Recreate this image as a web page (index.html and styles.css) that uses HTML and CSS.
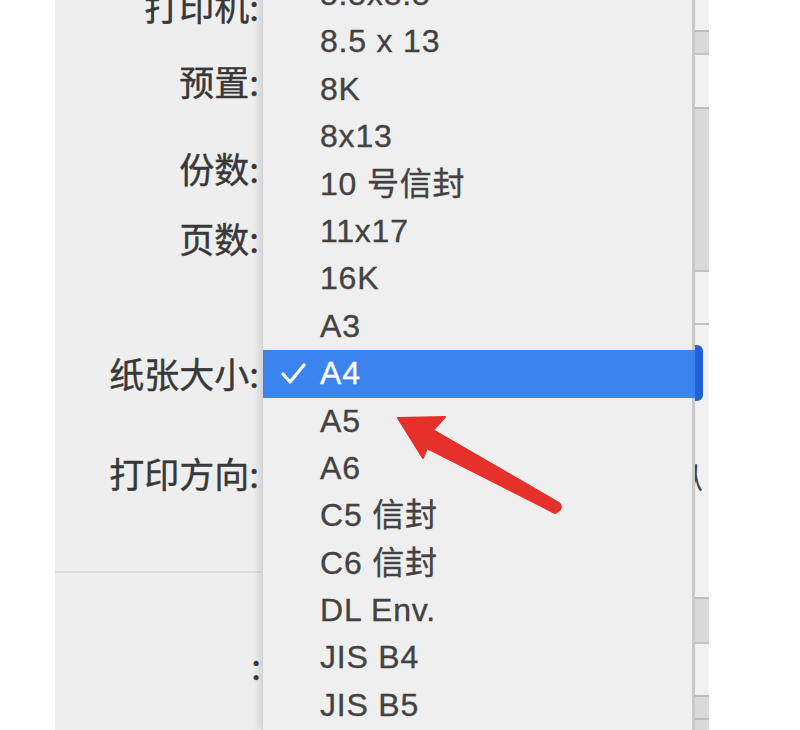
FILE: index.html
```html
<!DOCTYPE html>
<html lang="zh-CN">
<head>
  <meta charset="UTF-8" />
  <meta name="viewport" content="width=device-width, initial-scale=1.0" />
  <title>打印</title>
  <link rel="stylesheet" href="styles.css">
</head>
<body>
  <div class="dialog">
    <div class="labels">
      <div class="field f-printer">打印机:</div>
      <div class="field f-preset">预置:</div>
      <div class="field f-copies">份数:</div>
      <div class="field f-pages">页数:</div>
      <div class="field f-paper">纸张大小:</div>
      <div class="field f-orient">打印方向:</div>
      <div class="divider"></div>
      <div class="field f-more">:</div>
    </div>

    <div class="controls">
      <div class="ctl" style="height: 30px"></div>
      <div class="ctl dark" style="height: 23px"></div>
      <div class="ctl line" style="height: 54px"></div>
      <div class="ctl dark" style="height: 163px"></div>
      <div class="ctl line" style="height: 53px"></div>
      <div class="ctl line" style="height: 22px"></div>
      <div class="ctl popup" style="height: 56px"></div>
      <div class="ctl orient" style="height: 196px">纵</div>
      <div class="ctl dark" style="height: 45px"></div>
      <div class="ctl line" style="height: 53px"></div>
      <div class="ctl dark" style="height: 23px"></div>
      <div class="ctl dark" style="height: 12px"></div>
    </div>

    <!-- popup menu for paper size -->
    <ul class="menu">
      <li>5.5x8.5</li>
      <li>8.5 x 13</li>
      <li>8K</li>
      <li>8x13</li>
      <li>10 号信封</li>
      <li>11x17</li>
      <li>16K</li>
      <li>A3</li>
      <li class="selected">
        <svg class="check" width="26" height="24" viewBox="0 0 26 24">
          <polyline points="3,12 10,20 24,3" fill="none" stroke="#fff" stroke-width="3.2" stroke-linecap="round" stroke-linejoin="round" />
        </svg>A4
      </li>
      <li>A5</li>
      <li>A6</li>
      <li>C5 信封</li>
      <li>C6 信封</li>
      <li>DL Env.</li>
      <li>JIS B4</li>
      <li>JIS B5</li>
    </ul>
  </div>

  <svg class="arrow" width="800" height="730" viewBox="0 0 800 730">
    <path d="M398 418 L445 417 L433 430 L559 503 Q564 509 555 513 L427 448 L423 458 Z"
          fill="#e5302b" stroke="#e5302b" stroke-width="2" stroke-linejoin="round" />
  </svg>
</body>
</html>
```

FILE: styles.css
```css
* {
  margin: 0;
  padding: 0;
  box-sizing: border-box;
}

body {
  background: #ffffff;
  font-family: 'Liberation Sans', 'Noto Sans CJK SC', sans-serif;
  height: 730px;
  overflow: hidden;
  position: relative;
}

.dialog {
  position: relative;
  margin-left: 55px;
  width: 654px;
  height: 730px;
  display: flex;
  background: #eeeeee;
}

/* left column of labels */
.labels {
  width: 207px;
  display: flex;
  flex-direction: column;
}

.field {
  height: 40px;
  line-height: 40px;
  padding-right: 3px;
  text-align: right;
  font-family: 'Noto Sans CJK SC', sans-serif;
  font-size: 35px;
  color: #383838;
  -webkit-text-stroke: 0.4px #383838;
}

.f-printer { margin-top: -14px; }
.f-preset  { margin-top: 35px; }
.f-copies  { margin-top: 47px; }
.f-pages   { margin-top: 30px; }
.f-paper   { margin-top: 95px; }
.f-orient  { margin-top: 60px; }

.divider {
  margin-top: 78px;
  height: 2px;
  background: #dcdcdc;
}

.f-more {
  margin-top: 72px;
  padding-right: 1px;
}

/* controls sitting under the popup menu, only their right end shows */
.controls {
  flex: 1;
  display: flex;
  flex-direction: column;
  background: #f2f2f2;
}

.ctl {
  background: #f1f1f1;
}

.ctl.line {
  border-top: 2px solid #c2c2c2;
}

.ctl.dark {
  background: #d9d9d9;
  border-top: 2px solid #bcbcbc;
}

.ctl.popup {
  margin-right: 6px;
  border-radius: 0 6px 6px 0;
  background: linear-gradient(to right, #3b84f0 0%, #3b84f0 97%, #2466d8 98%, #1f5fd4 100%);
}

.ctl.orient {
  padding: 55px 6px 0 0;
  text-align: right;
  font-family: 'Noto Sans CJK SC', sans-serif;
  font-size: 30px;
  line-height: 40px;
  color: #444444;
}

/* popup menu */
.menu {
  position: absolute;
  left: 207px;
  top: -29px;
  width: 433px;
  height: 759px;
  list-style: none;
  background: #efefef;
  border-left: 1px solid #d2d2d2;
  border-right: 3px solid #c9c9c9;
  box-shadow: -4px 0 6px rgba(0, 0, 0, 0.1);
}

.menu li {
  position: relative;
  height: 47.4px;
  line-height: 47.4px;
  padding-left: 57px;
  font-size: 32px;
  letter-spacing: 0.8px;
  color: #424242;
  -webkit-text-stroke: 0.35px #424242;
}

.menu li.selected {
  margin-right: -3px;
  background: #3b84f0;
  color: #ffffff;
  -webkit-text-stroke: 0.35px #ffffff;
}

.check {
  position: absolute;
  left: 17px;
  top: 12px;
}

.arrow {
  position: absolute;
  left: 0;
  top: 0;
  pointer-events: none;
}
```
